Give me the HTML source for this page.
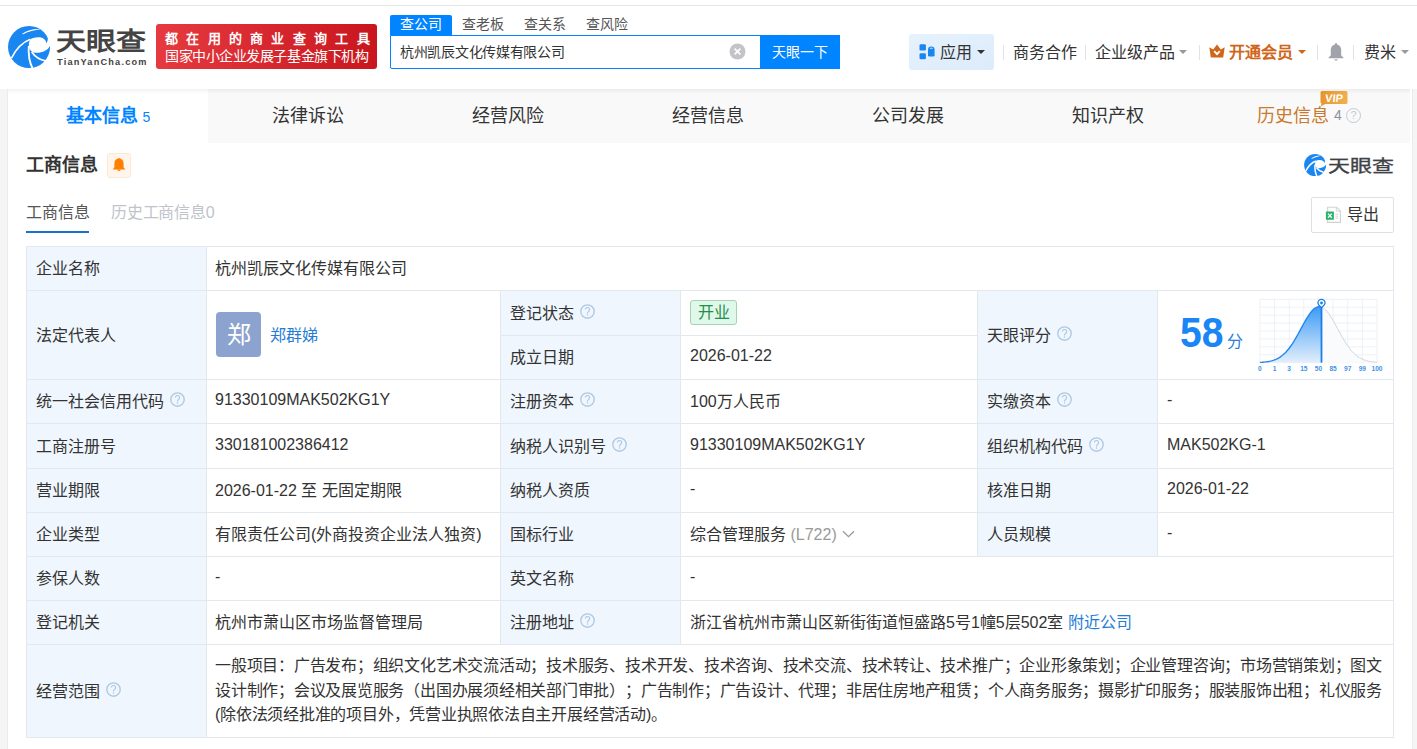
<!DOCTYPE html>
<html lang="zh-CN"><head><meta charset="utf-8">
<style>
*{margin:0;padding:0;box-sizing:border-box}
html,body{text-spacing-trim:space-all;width:1417px;height:749px;overflow:hidden;background:#f5f5f5;font-family:"Liberation Sans",sans-serif;color:#333}
.a{position:absolute;white-space:nowrap}
#hdr{position:absolute;left:0;top:0;width:1417px;height:89px;background:#fff;border-top:0}
#hdr .topline{position:absolute;left:0;top:5px;width:1417px;height:1px;background:#e6e6e6}
#card{position:absolute;left:8px;top:89px;width:1404px;height:660px;background:#fff;box-shadow:-1px 0 0 #ebebeb,1px 0 0 #ebebeb}
#tabs{position:absolute;left:8px;top:89px;width:1402px;height:54px;background:#f9f9f9}
#tabs:after{content:"";position:absolute;left:0;top:0;width:1402px;height:5px;background:linear-gradient(rgba(0,0,0,0.05),rgba(0,0,0,0))}
.tab{position:absolute;top:0;height:54px;width:200px;text-align:center;font-size:18px;line-height:55px;color:#333}
.cell{position:absolute;font-size:16px;color:#333;white-space:nowrap}
.lab{background:#eef6fd}
.q{display:inline-block;width:14px;height:14px;border:1.3px solid #bcd3ea;border-radius:50%;font-size:10px;line-height:11px;text-align:center;color:#bcd3ea;vertical-align:1px;margin-left:6px;font-weight:bold}
.ln{background:#e2e8ee}
.c{display:flex;align-items:center;font-size:16px;color:#333;margin-top:-1px}
.sc{font-size:16px;line-height:24px;color:#333;letter-spacing:-0.23px}
.q{font-style:normal}
.caret{width:0;height:0;border-left:4px solid transparent;border-right:4px solid transparent;border-top:4px solid #333}
.sep{top:45px;width:1px;height:15px;background:#e2e2e2}
.q2{margin-left:6px;flex:none}
</style></head><body>
<div id="hdr"><div class="topline"></div>
  <!-- logo -->
  <svg class="a" style="left:4px;top:22px" width="50" height="50" viewBox="0 0 749 749">
    <circle cx="375" cy="375" r="315" fill="#1a86f2"/>
    <path d="M385,268 C430,225 540,215 595,250 C625,272 640,300 628,322 C655,300 668,250 645,200 L730,200 L730,352 L692,352 C665,420 570,468 470,462 C405,455 368,405 372,330 Z" fill="#fff"/>
    <path d="M268,178 C350,120 460,98 548,108 C460,118 365,140 290,182 Z" fill="#fff"/>
    <path d="M112,540 C180,405 285,300 395,258" fill="none" stroke="#fff" stroke-width="24"/>
    <path d="M372,360 C362,480 378,600 432,705" fill="none" stroke="#fff" stroke-width="28"/>
    <path d="M415,448 C465,520 540,565 625,582" fill="none" stroke="#fff" stroke-width="26"/>
  </svg>
  <div class="a" style="left:56px;top:24px;font-size:30px;font-weight:bold;color:#444;line-height:34px;transform:scaleY(0.82);transform-origin:0 60%">天眼查</div>
  <div class="a" style="left:57px;top:58px;font-size:9.2px;font-weight:bold;color:#444;letter-spacing:1.2px;line-height:9px">TianYanCha.com</div>
  <!-- red banner -->
  <div class="a" style="left:156px;top:24px;width:221px;height:45px;background:linear-gradient(90deg,#e63a40,#c9161e);border-radius:3px"></div>
  <div class="a" style="left:165px;top:30px;font-size:13px;font-weight:bold;color:#fff;line-height:18px;letter-spacing:8.3px">都在用的商业查询工具</div>
  <div class="a" style="left:165px;top:47px;font-size:14px;letter-spacing:-0.45px;color:#fff;line-height:18px">国家中小企业发展子基金旗下机构</div>
  <!-- search tabs -->
  <div class="a" style="left:390px;top:15px;width:62px;height:20px;background:#0084ff;border-radius:2px 2px 0 0;color:#fff;font-size:14px;line-height:19px;text-align:center">查公司</div>
  <div class="a" style="left:462px;top:15px;font-size:14px;color:#555;line-height:19px">查老板</div>
  <div class="a" style="left:524px;top:15px;font-size:14px;color:#555;line-height:19px">查关系</div>
  <div class="a" style="left:586px;top:15px;font-size:14px;color:#555;line-height:19px">查风险</div>
  <div class="a" style="left:390px;top:35px;width:450px;height:34px;border:1px solid #0084ff;border-radius:0 2px 2px 2px;background:#fff"></div>
  <div class="a" style="left:400px;top:43px;font-size:14px;letter-spacing:-0.3px;color:#333;line-height:18px">杭州凯辰文化传媒有限公司</div>
  <svg class="a" style="left:729px;top:43px" width="17" height="17" viewBox="0 0 17 17"><circle cx="8.5" cy="8.5" r="8" fill="#c4c4c8"/><path d="M5.6 5.6L11.4 11.4M11.4 5.6L5.6 11.4" stroke="#fff" stroke-width="1.6"/></svg>
  <div class="a" style="left:760px;top:35px;width:80px;height:34px;background:#0084ff;color:#fff;font-size:14px;line-height:34px;text-align:center">天眼一下</div>
  <!-- right nav -->
  <div class="a" style="left:909px;top:34px;width:85px;height:36px;background:linear-gradient(160deg,#e6f2fd,#dcebfb);border-radius:3px"></div>
  <svg class="a" style="left:919px;top:44px" width="17" height="16" viewBox="0 0 17 16">
    <rect x="0.5" y="0.3" width="6.4" height="6.2" rx="1.3" fill="#1a86f2"/>
    <rect x="0.5" y="9.2" width="6.4" height="6" rx="1.3" fill="#1a86f2"/>
    <path d="M9 5.8a3.3 3.3 0 0 1 6.6 0V11.2a1.3 1.3 0 0 1-1.3 1.3H10.3a1.3 1.3 0 0 1-1.3-1.3z" fill="#1a86f2"/>
    <rect x="10.8" y="3.8" width="3" height="1" rx="0.5" fill="#bfe0ff"/>
  </svg>
  <div class="a" style="left:940px;top:43px;font-size:16px;line-height:20px;color:#333">应用</div>
  <div class="a caret" style="left:977px;top:50px;border-top-color:#333"></div>
  <div class="a sep" style="left:1003px"></div>
  <div class="a" style="left:1013px;top:43px;font-size:16px;line-height:20px;color:#333">商务合作</div>
  <div class="a sep" style="left:1085px"></div>
  <div class="a" style="left:1095px;top:43px;font-size:16px;line-height:20px;color:#333">企业级产品</div>
  <div class="a caret" style="left:1179px;top:50px;border-top-color:#999"></div>
  <div class="a sep" style="left:1199px"></div>
  <svg class="a" style="left:1209px;top:44px" width="16" height="14" viewBox="0 0 16 14">
    <path d="M0.3 3.2L4.2 5.6L8 0.6L11.8 5.6L15.7 3.2L14.2 13.5H1.8Z" fill="#d0661a"/>
    <path d="M5.2 7.2L8 10.2L10.8 7.2" fill="none" stroke="#fff" stroke-width="1.8"/>
  </svg>
  <div class="a" style="left:1229px;top:43px;font-size:16px;line-height:20px;color:#d0661a;font-weight:bold">开通会员</div>
  <div class="a caret" style="left:1298px;top:50px;border-top-color:#d0661a"></div>
  <div class="a sep" style="left:1317px"></div>
  <svg class="a" style="left:1328px;top:43px" width="16" height="18" viewBox="0 0 16 18">
    <rect x="7" y="0" width="2" height="2.5" rx="0.8" fill="#a0a4aa"/>
    <path d="M8 1.6C4.6 1.6 2.8 4.2 2.8 7.4V12.4L0.6 14.6V15.2H15.4V14.6L13.2 12.4V7.4C13.2 4.2 11.4 1.6 8 1.6Z" fill="#a0a4aa"/>
    <rect x="6.5" y="16.2" width="3" height="1.4" rx="0.6" fill="#a0a4aa"/>
  </svg>
  <div class="a sep" style="left:1353px"></div>
  <div class="a" style="left:1364px;top:43px;font-size:16px;line-height:20px;color:#333">费米</div>
  <div class="a caret" style="left:1401px;top:50px;border-top-color:#999"></div>
</div>
<div id="card"></div>
<div id="tabs">
  <div class="tab" style="left:0;background:#fff;color:#0084ff;font-weight:bold">基本信息 <span style="font-size:14px;font-weight:normal">5</span></div>
  <div class="tab" style="left:200px">法律诉讼</div>
  <div class="tab" style="left:400px">经营风险</div>
  <div class="tab" style="left:600px">经营信息</div>
  <div class="tab" style="left:800px">公司发展</div>
  <div class="tab" style="left:1000px">知识产权</div>
  <div class="a" style="left:1249px;top:17px;font-size:18px;line-height:20px;color:#c87a2e">历史信息</div>
  <div class="a" style="left:1326px;top:19px;font-size:14px;line-height:15px;color:#8c9099">4</div>
  <div class="a" style="left:1338px;top:18.5px;width:15px;height:15px;border:1px solid #c5cbd3;border-radius:50%;color:#c5cbd3;font-size:11px;line-height:13px;text-align:center">?</div>
  <svg class="a" style="left:1312px;top:2px" width="28" height="16" viewBox="0 0 28 16"><defs><linearGradient id="vg" x1="0" y1="0" x2="1" y2="0"><stop offset="0" stop-color="#e7962a"/><stop offset="1" stop-color="#f1b04e"/></linearGradient></defs><path d="M2 0H26a1.5 1.5 0 0 1 1.5 1.5V11.5a1.5 1.5 0 0 1-1.5 1.5H5.5L0.8 15.2L1.6 12.4A1.5 1.5 0 0 1 0.5 11V1.5A1.5 1.5 0 0 1 2 0Z" fill="url(#vg)"/><text x="14.2" y="10.8" text-anchor="middle" font-size="11" font-weight="bold" fill="#fff" font-family="Liberation Sans, sans-serif" transform="skewX(-6)" style="transform-origin:14px 6px">VIP</text></svg>
</div>
<!-- section header -->
<div class="a" style="left:26px;top:153px;font-size:18px;font-weight:bold;color:#333;line-height:24px">工商信息</div>
<div class="a" style="left:107px;top:153px;width:24px;height:25px;background:#fff5eb;border:1px solid #fbe9d6;border-radius:3px"></div>
<svg class="a" style="left:113px;top:157.5px" width="12" height="14" viewBox="0 0 12 14"><circle cx="6" cy="0.9" r="0.8" fill="#ff7f00"/><path d="M6 0.5C3.4 0.5 1.4 2.4 1.4 5.4V9.6L0 10.9V11.6H12V10.9L10.6 9.6V5.4C10.6 2.4 8.6 0.5 6 0.5Z" fill="#ff7f00"/><path d="M4.4 11.4a1.6 1.6 0 0 0 3.2 0z" fill="#ff7f00"/></svg>
<div class="a" style="left:26px;top:202px;font-size:16px;color:#555;line-height:22px">工商信息</div>
<div class="a" style="left:26px;top:231px;width:63px;height:2px;background:#1a73c9"></div>
<div class="a" style="left:111px;top:202px;font-size:16px;color:#bfc3ca;line-height:22px;letter-spacing:-0.2px">历史工商信息0</div>
<div class="a" style="left:1311px;top:197px;width:83px;height:36px;border:1px solid #e0e0e0;border-radius:2px;background:#fff"></div>
<svg class="a" style="left:1325px;top:206px" width="17" height="18" viewBox="0 0 17 18"><path d="M2.6 1.2H11.6L15.4 5V16.4H2.6Z" fill="#fff" stroke="#d2d2d2" stroke-width="1.1"/><path d="M11.4 1.2V5.2H15.4" fill="none" stroke="#d2d2d2" stroke-width="0.9"/><rect x="0.9" y="5.6" width="8" height="8.2" rx="0.6" fill="#2db06a"/><path d="M3 7.6L6.8 11.8M6.8 7.6L3 11.8" stroke="#e6fff0" stroke-width="1.4"/><path d="M10.4 8.2H13.2M10.4 10.2H13.2M10.4 12.2H13.2" stroke="#d6d6d6" stroke-width="1"/></svg>
<div class="a" style="left:1347px;top:204px;font-size:16px;color:#333;line-height:22px">导出</div>
<!-- small logo -->
<svg class="a" style="left:1301.6px;top:152.4px" width="26.2" height="26.2" viewBox="0 0 749 749">
    <circle cx="375" cy="375" r="315" fill="#1a86f2"/>
    <path d="M385,268 C430,225 540,215 595,250 C625,272 640,300 628,322 C655,300 668,250 645,200 L730,200 L730,352 L692,352 C665,420 570,468 470,462 C405,455 368,405 372,330 Z" fill="#fff"/>
    <path d="M260,185 C350,110 460,88 560,100 C460,128 365,150 290,195 Z" fill="#fff"/>
    <path d="M112,540 C180,405 285,300 395,258" fill="none" stroke="#fff" stroke-width="40"/>
    <path d="M372,360 C362,480 378,600 432,705" fill="none" stroke="#fff" stroke-width="44"/>
    <path d="M415,448 C465,520 540,565 625,582" fill="none" stroke="#fff" stroke-width="42"/>
  </svg>
<div class="a" style="left:1328px;top:153px;font-size:22px;color:#3e4146;line-height:26px;transform:scaleY(0.8);transform-origin:0 50%;-webkit-text-stroke:0.4px #3e4146">天眼查</div>
<div class="a" style="left:26px;top:246px;width:1367px;height:491px;background:#fff"></div>
<div class="a" style="left:26px;top:246px;width:180px;height:491px;background:#eff6fd"></div>
<div class="a" style="left:500px;top:290px;width:180px;height:354px;background:#eff6fd"></div>
<div class="a" style="left:977px;top:290px;width:180px;height:266px;background:#eff6fd"></div>
<div class="a ln" style="left:26px;top:246px;width:1368px;height:1px"></div>
<div class="a ln" style="left:26px;top:290px;width:1368px;height:1px"></div>
<div class="a ln" style="left:26px;top:379px;width:1368px;height:1px"></div>
<div class="a ln" style="left:26px;top:423px;width:1368px;height:1px"></div>
<div class="a ln" style="left:26px;top:468px;width:1368px;height:1px"></div>
<div class="a ln" style="left:26px;top:512px;width:1368px;height:1px"></div>
<div class="a ln" style="left:26px;top:556px;width:1368px;height:1px"></div>
<div class="a ln" style="left:26px;top:600px;width:1368px;height:1px"></div>
<div class="a ln" style="left:26px;top:644px;width:1368px;height:1px"></div>
<div class="a ln" style="left:26px;top:737px;width:1368px;height:1px"></div>
<div class="a ln" style="left:500px;top:335px;width:478px;height:1px"></div>
<div class="a ln" style="left:26px;top:246px;width:1px;height:492px"></div>
<div class="a ln" style="left:1393px;top:246px;width:1px;height:492px"></div>
<div class="a ln" style="left:206px;top:246px;width:1px;height:492px"></div>
<div class="a ln" style="left:500px;top:290px;width:1px;height:355px"></div>
<div class="a ln" style="left:680px;top:290px;width:1px;height:355px"></div>
<div class="a ln" style="left:977px;top:290px;width:1px;height:267px"></div>
<div class="a ln" style="left:1157px;top:290px;width:1px;height:267px"></div>
<div class="a c" style="left:36px;top:246px;height:44px;"><span class="in">企业名称</span></div>
<div class="a c" style="left:36px;top:290px;height:89px;"><span class="in">法定代表人</span></div>
<div class="a c" style="left:36px;top:379px;height:44px;"><span class="in">统一社会信用代码<svg class="q2" width="15" height="15" viewBox="0 0 15 15"><circle cx="7.5" cy="7.5" r="6.7" fill="none" stroke="#afc8e2" stroke-width="1.35"/><path d="M5.4 5.6a2.1 2.1 0 1 1 3.2 1.8c-0.7 0.4-1.1 0.8-1.1 1.6v0.4" fill="none" stroke="#afc8e2" stroke-width="1.2"/><circle cx="7.5" cy="11" r="0.75" fill="#afc8e2"/></svg></span></div>
<div class="a c" style="left:36px;top:423px;height:45px;"><span class="in">工商注册号</span></div>
<div class="a c" style="left:36px;top:468px;height:44px;"><span class="in">营业期限</span></div>
<div class="a c" style="left:36px;top:512px;height:44px;"><span class="in">企业类型</span></div>
<div class="a c" style="left:36px;top:556px;height:44px;"><span class="in">参保人数</span></div>
<div class="a c" style="left:36px;top:600px;height:44px;"><span class="in">登记机关</span></div>
<div class="a c" style="left:36px;top:644px;height:93px;"><span class="in">经营范围<svg class="q2" width="15" height="15" viewBox="0 0 15 15"><circle cx="7.5" cy="7.5" r="6.7" fill="none" stroke="#afc8e2" stroke-width="1.35"/><path d="M5.4 5.6a2.1 2.1 0 1 1 3.2 1.8c-0.7 0.4-1.1 0.8-1.1 1.6v0.4" fill="none" stroke="#afc8e2" stroke-width="1.2"/><circle cx="7.5" cy="11" r="0.75" fill="#afc8e2"/></svg></span></div>
<div class="a c" style="left:215px;top:246px;height:44px;"><span class="in">杭州凯辰文化传媒有限公司</span></div>
<div class="a c" style="left:215px;top:379px;height:44px;"><span class="in">91330109MAK502KG1Y</span></div>
<div class="a c" style="left:215px;top:423px;height:45px;"><span class="in">330181002386412</span></div>
<div class="a c" style="left:215px;top:468px;height:44px;"><span class="in">2026-01-22 至 无固定期限</span></div>
<div class="a c" style="left:215px;top:512px;height:44px;"><span class="in">有限责任公司(外商投资企业法人独资)</span></div>
<div class="a c" style="left:215px;top:556px;height:44px;"><span class="in">-</span></div>
<div class="a c" style="left:215px;top:600px;height:44px;"><span class="in">杭州市萧山区市场监督管理局</span></div>
<div class="a c" style="left:510px;top:290px;height:45px;"><span class="in">登记状态<svg class="q2" width="15" height="15" viewBox="0 0 15 15"><circle cx="7.5" cy="7.5" r="6.7" fill="none" stroke="#afc8e2" stroke-width="1.35"/><path d="M5.4 5.6a2.1 2.1 0 1 1 3.2 1.8c-0.7 0.4-1.1 0.8-1.1 1.6v0.4" fill="none" stroke="#afc8e2" stroke-width="1.2"/><circle cx="7.5" cy="11" r="0.75" fill="#afc8e2"/></svg></span></div>
<div class="a c" style="left:510px;top:335px;height:44px;"><span class="in">成立日期</span></div>
<div class="a c" style="left:510px;top:379px;height:44px;"><span class="in">注册资本<svg class="q2" width="15" height="15" viewBox="0 0 15 15"><circle cx="7.5" cy="7.5" r="6.7" fill="none" stroke="#afc8e2" stroke-width="1.35"/><path d="M5.4 5.6a2.1 2.1 0 1 1 3.2 1.8c-0.7 0.4-1.1 0.8-1.1 1.6v0.4" fill="none" stroke="#afc8e2" stroke-width="1.2"/><circle cx="7.5" cy="11" r="0.75" fill="#afc8e2"/></svg></span></div>
<div class="a c" style="left:510px;top:423px;height:45px;"><span class="in">纳税人识别号<svg class="q2" width="15" height="15" viewBox="0 0 15 15"><circle cx="7.5" cy="7.5" r="6.7" fill="none" stroke="#afc8e2" stroke-width="1.35"/><path d="M5.4 5.6a2.1 2.1 0 1 1 3.2 1.8c-0.7 0.4-1.1 0.8-1.1 1.6v0.4" fill="none" stroke="#afc8e2" stroke-width="1.2"/><circle cx="7.5" cy="11" r="0.75" fill="#afc8e2"/></svg></span></div>
<div class="a c" style="left:510px;top:468px;height:44px;"><span class="in">纳税人资质</span></div>
<div class="a c" style="left:510px;top:512px;height:44px;"><span class="in">国标行业</span></div>
<div class="a c" style="left:510px;top:556px;height:44px;"><span class="in">英文名称</span></div>
<div class="a c" style="left:510px;top:600px;height:44px;"><span class="in">注册地址<svg class="q2" width="15" height="15" viewBox="0 0 15 15"><circle cx="7.5" cy="7.5" r="6.7" fill="none" stroke="#afc8e2" stroke-width="1.35"/><path d="M5.4 5.6a2.1 2.1 0 1 1 3.2 1.8c-0.7 0.4-1.1 0.8-1.1 1.6v0.4" fill="none" stroke="#afc8e2" stroke-width="1.2"/><circle cx="7.5" cy="11" r="0.75" fill="#afc8e2"/></svg></span></div>
<div class="a c" style="left:690px;top:335px;height:44px;"><span class="in">2026-01-22</span></div>
<div class="a c" style="left:690px;top:379px;height:44px;"><span class="in">100万人民币</span></div>
<div class="a c" style="left:690px;top:423px;height:45px;"><span class="in">91330109MAK502KG1Y</span></div>
<div class="a c" style="left:690px;top:468px;height:44px;"><span class="in">-</span></div>
<div class="a c" style="left:690px;top:512px;height:44px;"><span class="in">综合管理服务 <span style="color:#999">(L722)</span><svg style="margin-left:5px;vertical-align:2px" width="13" height="8" viewBox="0 0 13 8"><path d="M1 1.2 L6.5 6.6 L12 1.2" fill="none" stroke="#999" stroke-width="1.3"/></svg></span></div>
<div class="a c" style="left:690px;top:556px;height:44px;"><span class="in">-</span></div>
<div class="a c" style="left:690px;top:600px;height:44px;"><span class="in">浙江省杭州市萧山区新街街道恒盛路5号1幢5层502室 <span style="color:#1f7dd6">附近公司</span></span></div>
<div class="a c" style="left:987px;top:290px;height:89px;"><span class="in">天眼评分<svg class="q2" width="15" height="15" viewBox="0 0 15 15"><circle cx="7.5" cy="7.5" r="6.7" fill="none" stroke="#afc8e2" stroke-width="1.35"/><path d="M5.4 5.6a2.1 2.1 0 1 1 3.2 1.8c-0.7 0.4-1.1 0.8-1.1 1.6v0.4" fill="none" stroke="#afc8e2" stroke-width="1.2"/><circle cx="7.5" cy="11" r="0.75" fill="#afc8e2"/></svg></span></div>
<div class="a c" style="left:987px;top:379px;height:44px;"><span class="in">实缴资本<svg class="q2" width="15" height="15" viewBox="0 0 15 15"><circle cx="7.5" cy="7.5" r="6.7" fill="none" stroke="#afc8e2" stroke-width="1.35"/><path d="M5.4 5.6a2.1 2.1 0 1 1 3.2 1.8c-0.7 0.4-1.1 0.8-1.1 1.6v0.4" fill="none" stroke="#afc8e2" stroke-width="1.2"/><circle cx="7.5" cy="11" r="0.75" fill="#afc8e2"/></svg></span></div>
<div class="a c" style="left:987px;top:423px;height:45px;"><span class="in">组织机构代码<svg class="q2" width="15" height="15" viewBox="0 0 15 15"><circle cx="7.5" cy="7.5" r="6.7" fill="none" stroke="#afc8e2" stroke-width="1.35"/><path d="M5.4 5.6a2.1 2.1 0 1 1 3.2 1.8c-0.7 0.4-1.1 0.8-1.1 1.6v0.4" fill="none" stroke="#afc8e2" stroke-width="1.2"/><circle cx="7.5" cy="11" r="0.75" fill="#afc8e2"/></svg></span></div>
<div class="a c" style="left:987px;top:468px;height:44px;"><span class="in">核准日期</span></div>
<div class="a c" style="left:987px;top:512px;height:44px;"><span class="in">人员规模</span></div>
<div class="a c" style="left:1167px;top:379px;height:44px;"><span class="in">-</span></div>
<div class="a c" style="left:1167px;top:423px;height:45px;"><span class="in">MAK502KG-1</span></div>
<div class="a c" style="left:1167px;top:468px;height:44px;"><span class="in">2026-01-22</span></div>
<div class="a c" style="left:1167px;top:512px;height:44px;"><span class="in">-</span></div>
<div class="a" style="left:216px;top:312px;width:45px;height:45px;border-radius:4px;background:#8ca3cf;color:#fff;font-size:24px;line-height:45px;text-align:center">郑</div>
<div class="a c" style="left:270px;top:290px;height:89px;color:#1f7dd6">郑群娣</div>
<div class="a" style="left:690px;top:300px;width:47px;height:25px;border:1px solid #a3d5b3;background:#e0f8e9;border-radius:3px;color:#288c4a;font-size:16px;line-height:24px;text-align:center">开业</div>
<div class="a" style="left:1180px;top:311px;font-size:42px;font-weight:bold;color:#1a86f5;line-height:44px;transform:scaleX(0.93);transform-origin:0 0">58</div>
<div class="a" style="left:1227px;top:333px;font-size:16px;color:#2a80d8;line-height:18px">分</div>
<div class="a sc" id="sc0" style="left:215px;top:654.0px">一般项目：广告发布；组织文化艺术交流活动；技术服务、技术开发、技术咨询、技术交流、技术转让、技术推广；企业形象策划；企业管理咨询；市场营销策划；图文</div>
<div class="a sc" id="sc1" style="left:215px;top:678.5px">设计制作；会议及展览服务（出国办展须经相关部门审批）；广告制作；广告设计、代理；非居住房地产租赁；个人商务服务；摄影扩印服务；服装服饰出租；礼仪服务</div>
<div class="a sc" id="sc2" style="left:215px;top:703.0px">(除依法须经批准的项目外，凭营业执照依法自主开展经营活动)。</div>
<svg class="a" style="left:1255px;top:295px" width="130" height="80" viewBox="0 0 130 80">
<defs><linearGradient id="gf" x1="0" y1="0" x2="0" y2="1"><stop offset="0" stop-color="#3d9bf6"/><stop offset="1" stop-color="#e3effc"/></linearGradient></defs>
<g stroke="#edf1f7" stroke-width="1"><line x1="4.90" y1="4.30" x2="4.90" y2="67.70"/><line x1="19.54" y1="4.30" x2="19.54" y2="67.70"/><line x1="34.18" y1="4.30" x2="34.18" y2="67.70"/><line x1="48.81" y1="4.30" x2="48.81" y2="67.70"/><line x1="63.45" y1="4.30" x2="63.45" y2="67.70"/><line x1="78.09" y1="4.30" x2="78.09" y2="67.70"/><line x1="92.73" y1="4.30" x2="92.73" y2="67.70"/><line x1="107.36" y1="4.30" x2="107.36" y2="67.70"/><line x1="122.00" y1="4.30" x2="122.00" y2="67.70"/><line x1="4.90" y1="4.30" x2="122.00" y2="4.30"/><line x1="4.90" y1="12.23" x2="122.00" y2="12.23"/><line x1="4.90" y1="20.15" x2="122.00" y2="20.15"/><line x1="4.90" y1="28.08" x2="122.00" y2="28.08"/><line x1="4.90" y1="36.00" x2="122.00" y2="36.00"/><line x1="4.90" y1="43.92" x2="122.00" y2="43.92"/><line x1="4.90" y1="51.85" x2="122.00" y2="51.85"/><line x1="4.90" y1="59.77" x2="122.00" y2="59.77"/><line x1="4.90" y1="67.70" x2="122.00" y2="67.70"/></g>
<polygon points="66.50,12.00 67.84,12.64 69.31,13.66 70.77,15.00 72.23,16.63 73.70,18.53 75.16,20.66 76.62,22.98 78.09,25.46 79.55,28.06 81.02,30.73 82.48,33.45 83.94,36.17 85.41,38.85 86.87,41.48 88.33,44.02 89.80,46.45 91.26,48.75 92.73,50.91 94.19,52.92 95.65,54.77 97.12,56.46 98.58,57.99 100.04,59.37 101.51,60.60 102.97,61.68 104.44,62.64 105.90,63.46 107.36,64.18 108.83,64.79 110.29,65.31 111.75,65.76 113.22,66.12 114.68,66.43 116.15,66.69 117.61,66.89 119.07,67.06 120.54,67.20 122.00,67.31 122.00,67.70 66.50,67.70" fill="#fafbfc"/>
<polyline points="66.50,12.00 67.84,12.64 69.31,13.66 70.77,15.00 72.23,16.63 73.70,18.53 75.16,20.66 76.62,22.98 78.09,25.46 79.55,28.06 81.02,30.73 82.48,33.45 83.94,36.17 85.41,38.85 86.87,41.48 88.33,44.02 89.80,46.45 91.26,48.75 92.73,50.91 94.19,52.92 95.65,54.77 97.12,56.46 98.58,57.99 100.04,59.37 101.51,60.60 102.97,61.68 104.44,62.64 105.90,63.46 107.36,64.18 108.83,64.79 110.29,65.31 111.75,65.76 113.22,66.12 114.68,66.43 116.15,66.69 117.61,66.89 119.07,67.06 120.54,67.20 122.00,67.31" fill="none" stroke="#cfd6de" stroke-width="1"/>
<polygon points="4.90,67.41 6.36,67.33 7.83,67.22 9.29,67.09 10.76,66.92 12.22,66.72 13.68,66.48 15.15,66.18 16.61,65.82 18.07,65.39 19.54,64.88 21.00,64.29 22.47,63.59 23.93,62.78 25.39,61.85 26.86,60.78 28.32,59.58 29.78,58.23 31.25,56.72 32.71,55.05 34.18,53.23 35.64,51.24 37.10,49.11 38.57,46.83 40.03,44.42 41.49,41.89 42.96,39.28 44.42,36.60 45.89,33.89 47.35,31.17 48.81,28.49 50.28,25.87 51.74,23.37 53.20,21.02 54.67,18.86 56.13,16.92 57.60,15.24 59.06,13.85 60.52,12.78 61.99,12.05 63.45,11.66 64.91,11.63 66.38,11.96 66.50,12.00 66.50,67.70" fill="url(#gf)"/>
<polyline points="4.90,67.41 6.36,67.33 7.83,67.22 9.29,67.09 10.76,66.92 12.22,66.72 13.68,66.48 15.15,66.18 16.61,65.82 18.07,65.39 19.54,64.88 21.00,64.29 22.47,63.59 23.93,62.78 25.39,61.85 26.86,60.78 28.32,59.58 29.78,58.23 31.25,56.72 32.71,55.05 34.18,53.23 35.64,51.24 37.10,49.11 38.57,46.83 40.03,44.42 41.49,41.89 42.96,39.28 44.42,36.60 45.89,33.89 47.35,31.17 48.81,28.49 50.28,25.87 51.74,23.37 53.20,21.02 54.67,18.86 56.13,16.92 57.60,15.24 59.06,13.85 60.52,12.78 61.99,12.05 63.45,11.66 64.91,11.63 66.38,11.96 66.50,12.00" fill="none" stroke="#2088ee" stroke-width="1.4"/>
<line x1="66.50" y1="12.00" x2="66.50" y2="67.70" stroke="#1a7fe6" stroke-width="1.8"/>
<path d="M62.90,8.00 a3.6,3.6 0 1,1 7.2,0 c0,2 -2.2,3.2 -3.6,4.4 c-1.4,-1.2 -3.6,-2.4 -3.6,-4.4z" fill="#fff" stroke="#1a7fe6" stroke-width="1.3"/>
<circle cx="66.50" cy="8" r="1.4" fill="#1a7fe6"/>
<g font-size="6.6" font-weight="bold" fill="#3f93ea" font-family="Liberation Sans, sans-serif"><text x="4.90" y="75.5" text-anchor="middle">0</text><text x="19.54" y="75.5" text-anchor="middle">1</text><text x="34.18" y="75.5" text-anchor="middle">3</text><text x="48.81" y="75.5" text-anchor="middle">15</text><text x="63.45" y="75.5" text-anchor="middle">50</text><text x="78.09" y="75.5" text-anchor="middle">85</text><text x="92.73" y="75.5" text-anchor="middle">97</text><text x="107.36" y="75.5" text-anchor="middle">99</text><text x="122.00" y="75.5" text-anchor="middle">100</text></g>
</svg>
</body></html>
